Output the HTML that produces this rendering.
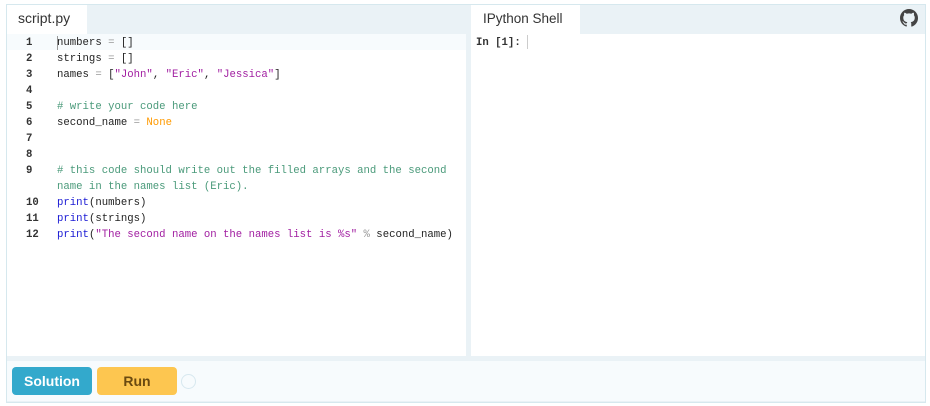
<!DOCTYPE html>
<html><head><style>
body{margin:0;width:930px;height:406px;background:#fff;font-family:"Liberation Sans",sans-serif;position:relative;overflow:hidden}
.a{position:absolute}
.code{font-family:"Liberation Mono",monospace;font-size:10.65px;line-height:16px;white-space:pre;color:#222}
.s{color:#a11ea1}
.c{color:#4a9a7a}
.k{color:#1a1ad4}
.o{color:#ff9a00}
.p{color:#999}
</style></head><body>
<div class="a" style="left:6px;top:4px;width:918px;height:397px;border:1px solid #d6e8ee;background:#eaf2f6"></div>
<div class="a" style="left:7px;top:34px;width:459px;height:322px;background:#fff"></div>
<div class="a" style="left:471px;top:34px;width:454px;height:322px;background:#fff"></div>
<div class="a" style="left:7px;top:34px;width:459px;height:16px;background:#f7fbfd"></div>
<div class="a" style="left:7px;top:5px;width:80px;height:29px;background:#fff"></div>
<div class="a" style="left:18px;top:10px;font-size:14px;color:#333">script.py</div>
<div class="a" style="left:471px;top:5px;width:109px;height:29px;background:#fff"></div>
<div class="a" style="left:483px;top:11px;font-size:13.5px;color:#333">IPython Shell</div>
<svg class="a" style="left:900px;top:9px" width="18" height="18" viewBox="0 0 16 16"><path fill="#444" d="M8 0C3.58 0 0 3.580 0 8c0 3.54 2.29 6.53 5.470 7.59.4.07.55-.17.55-.38v-1.33c-2.23.48-2.7-1.07-2.7-1.070-.36-.92-.89-1.17-.89-1.17-.73-.5.06-.49.06-.49.8.06 1.23.83 1.23.83.71 1.22 1.87.87 2.33.66.07-.52.28-.87.51-1.07-1.78-.2-3.64-.89-3.64-3.95 0-.87.31-1.59.82-2.15-.08-.2-.36-1.02.08-2.12 0 0 .67-.21 2.2.82a7.6 7.6 0 014 0c1.53-1.04 2.2-.82 2.2-.82.44 1.1.16 1.92.08 2.12.51.56.82 1.27.82 2.15 0 3.07-1.87 3.75-3.65 3.95.29.25.54.73.54 1.48v2.2c0 .21.15.46.55.38A8.01 8.01 0 0016 8c0-4.42-3.58-8-8-8z"/></svg>
<div class="a code" style="left:26px;top:35px;font-weight:bold;color:#333">1
2
3
4
5
6
7
8
9

10
11
12</div>
<div class="a" style="left:57px;top:36px;width:1px;height:14px;background:#999"></div>
<div class="a code" style="left:57px;top:35px">numbers <span class="p">=</span> []
strings <span class="p">=</span> []
names <span class="p">=</span> [<span class="s">"John"</span>, <span class="s">"Eric"</span>, <span class="s">"Jessica"</span>]

<span class="c"># write your code here</span>
second_name <span class="p">=</span> <span class="o">None</span>


<span class="c"># this code should write out the filled arrays and the second
name in the names list (Eric).</span>
<span class="k">print</span>(numbers)
<span class="k">print</span>(strings)
<span class="k">print</span>(<span class="s">"The second name on the names list is %s"</span> <span class="p">%</span> second_name)</div>
<div class="a code" style="left:476px;top:35px;font-weight:bold;color:#333">In [1]:</div>
<div class="a" style="left:527px;top:35px;width:1px;height:14px;background:#ccc"></div>
<div class="a" style="left:7px;top:361px;width:918px;height:40px;background:#f7fbfd"></div>
<div class="a" style="left:12px;top:367px;width:80px;height:28px;background:#33a9cc;border-radius:4px;color:#fff;font-weight:bold;font-size:14px;line-height:28px;text-align:center">Solution</div>
<div class="a" style="left:97px;top:367px;width:80px;height:28px;background:#fdc650;border-radius:4px;color:#6b4a10;font-weight:bold;font-size:14px;line-height:28px;text-align:center">Run</div>
<div class="a" style="left:181px;top:374px;width:13px;height:13px;border:1.5px solid #d7e8ef;border-radius:50%"></div>
</body></html>
